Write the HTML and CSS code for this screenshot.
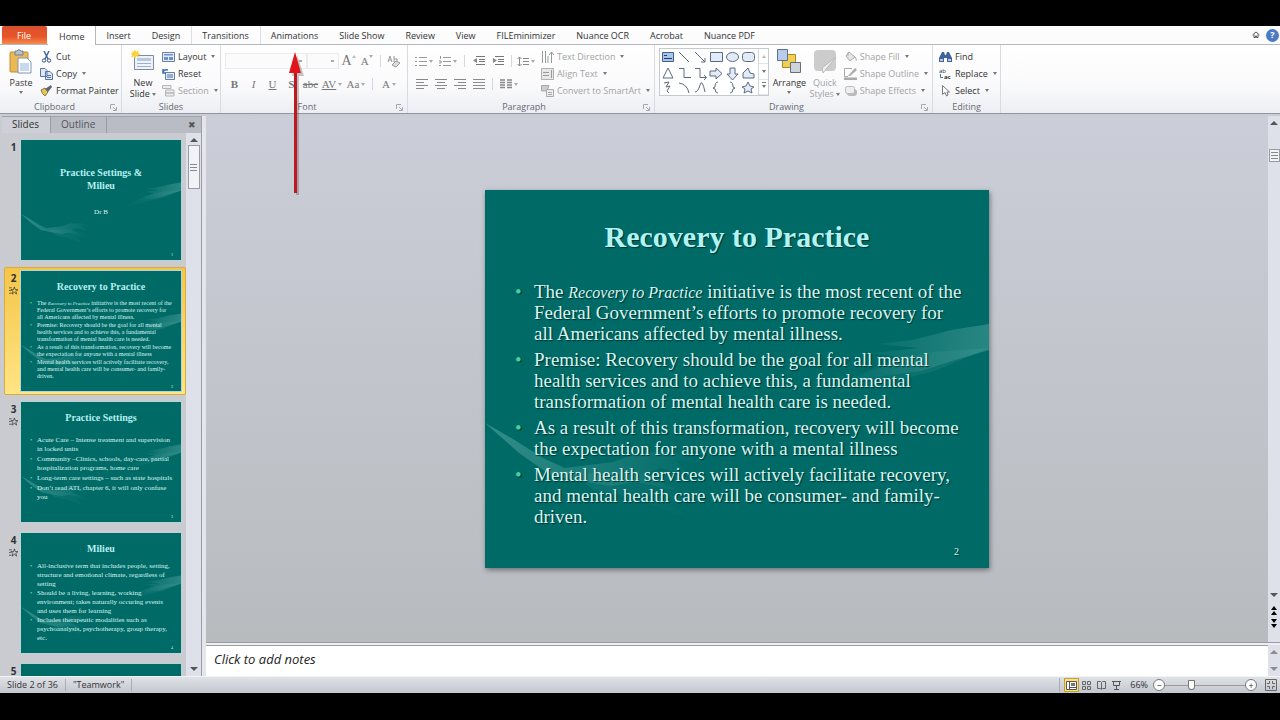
FILE: index.html
```html
<!DOCTYPE html>
<html lang="en">
<head>
    <meta charset="UTF-8">
    <meta name="viewport" content="width=device-width, initial-scale=1.0">
    <title>Recovery to Practice</title>
    <link rel="stylesheet" href="styles.css">
</head>
<body>
    <svg class="sprite" width="0" height="0" aria-hidden="true">
        <defs>
            <linearGradient id="fade"><stop offset="0" stop-color="#5aa9a3"/><stop offset="1" stop-color="#5aa9a3" stop-opacity="0"/></linearGradient>
            <linearGradient id="fadeLeft"><stop offset="0" stop-color="#5aa9a3" stop-opacity="0"/><stop offset="1" stop-color="#5aa9a3"/></linearGradient>
        </defs>
        <symbol id="hands" viewBox="0 0 504 378">
            <path fill="url(#fadeLeft)" opacity=".45" d="M392 154 428 150 466 140 504 134V160L470 170 436 181 398 186 362 190 420 168 388 163 434 158Z"/>
            <path fill="url(#fadeLeft)" opacity=".2" d="M504 158 452 180 404 193 360 202 320 214 352 196 392 176 448 162Z"/>
            <path fill="url(#fade)" opacity=".55" d="M0 233 28 249 58 268 80 278 128 272 156 262 190 262 224 274 190 270 206 286 176 278 158 284 192 300 150 292 126 296 90 290 64 284 34 263Z"/>
            <path fill="url(#fade)" opacity=".15" d="M90 284 150 282 194 290 220 312 176 306 204 328 148 308 108 300Z"/>
        </symbol>
        <symbol id="star" viewBox="0 0 10 10">
            <path fill="none" stroke="#333" stroke-width=".8" d="M6 1 7 4H10L7.500 6 8.500 9 6 7 3.500 9 4.500 6 2 4H5ZM0 2H3M0 5H2M0 8H3"/>
        </symbol>
        <symbol id="launcher" viewBox="0 0 7 7">
            <path fill="none" stroke="#a5a9b0" d="M.5 5V.5H5M3 3 6 6M6.500 3V6.500H3"/>
        </symbol>
        <symbol id="lines" viewBox="0 0 12 10">
            <path stroke="#8b8b8b" d="M0 .5H12M0 3.500H12M0 6.500H12M0 9.500H12"/>
        </symbol>
    </svg>

    <div class="window">
        <nav class="tabs">
            <button class="tab file">File</button>
            <button class="tab active">Home</button>
            <button class="tab">Insert</button>
            <button class="tab">Design</button>
            <button class="tab framed">Transitions</button>
            <button class="tab">Animations</button>
            <button class="tab">Slide Show</button>
            <button class="tab">Review</button>
            <button class="tab">View</button>
            <button class="tab">FILEminimizer</button>
            <button class="tab">Nuance OCR</button>
            <button class="tab">Acrobat</button>
            <button class="tab">Nuance PDF</button>
            <span class="tools">
                <button aria-label="Minimize the Ribbon"><svg width="8" height="8" viewBox="0 0 8 8"><path fill="none" stroke="#555" d="M.5 4 4 1 7.500 4M2 3.500V6.500H3.500V5H4.500V6.500H6V3.500"/></svg></button>
                <button class="help" aria-label="Help">?</button>
            </span>
        </nav>

        <div class="ribbon">
            <section class="group clipboard">
                <div class="content">
                    <button class="big">
                        <svg width="24" height="25" viewBox="0 0 24 25"><rect x="1" y="3" width="18" height="20" rx="1" fill="#e9b955" stroke="#c08d35"/><path fill="#b8c0cc" stroke="#76808f" d="M6 2H8Q10-1 12 2H14V6H6Z"/><path fill="#fff" stroke="#7d93b8" d="M9 9H18L22 13V24H9Z"/><path fill="#c8d8ee" d="M11 14H20V22H11Z"/></svg>
                        <span>Paste</span><i class="caret"></i>
                    </button>
                    <div class="rows">
                        <button class="item"><svg width="13" height="12" viewBox="0 0 13 12"><path fill="none" stroke="#48669c" stroke-width="1.500" d="M4 0 8 8M9 0 5 8"/><circle cx="4" cy="9.500" r="1.700" fill="none" stroke="#34528c"/><circle cx="9" cy="9.500" r="1.700" fill="none" stroke="#34528c"/></svg>Cut</button>
                        <button class="item"><svg width="13" height="12" viewBox="0 0 13 12"><path fill="#dce7f7" stroke="#58749f" d="M.5.5H5L7 2.500V8.500H.5ZM5.500 3.500H10L12.500 6V11.500H5.500Z"/><path stroke="#58749f" d="M7 7.500H11M7 9.500H11"/></svg>Copy <i class="caret"></i></button>
                        <button class="item"><svg width="13" height="12" viewBox="0 0 13 12"><path fill="#e6c65a" stroke="#8a7634" d="M1 5 5 3 8 7 5 11Q2 9 1 5Z"/><path fill="#5c6673" d="M5 4 11 0 12 2 8 7Z"/></svg>Format Painter</button>
                    </div>
                </div>
                <div class="caption dialog">Clipboard<svg class="launcher" width="7" height="7"><use href="#launcher"/></svg></div>
            </section>

            <section class="group slides">
                <div class="content">
                    <button class="big">
                        <svg width="24" height="25" viewBox="0 0 24 25"><path fill="#eef3fa" stroke="#7e8ca3" d="M3.500 6.500H22.500V20.500H3.500Z"/><path fill="#b9c9e2" d="M6 9H20V12H6Z"/><path stroke="#9eb0cc" d="M6 14.500H20M6 17.500H20"/><path fill="#f6d33c" d="M4 0 5 3 8 1 7 4 10 5 7 6 8 9 5 7 4 10 3 7 0 9 1 6 0 4 2 4 0 1 3 3Z"/></svg>
                        <span>New<br>Slide <i class="caret"></i></span>
                    </button>
                    <div class="rows">
                        <button class="item"><svg width="13" height="12" viewBox="0 0 13 12"><path fill="#e5edf8" stroke="#6b7f9f" d="M.5 1.500H12.500V10.500H.5Z"/><path fill="#6d90c8" d="M2 3H11V4.500H2ZM2 6H6V9H2ZM7 6H11V9H7Z"/></svg>Layout <i class="caret"></i></button>
                        <button class="item"><svg width="13" height="12" viewBox="0 0 13 12"><path fill="#e5edf8" stroke="#6b7f9f" d="M3.500 4.500H12.500V11.500H3.500Z"/><path fill="#93aed6" d="M5 6H11V10H5Z"/><path fill="none" stroke="#3f6db4" stroke-width="1.500" d="M1 5Q1 1 6 2M1 1V5H4"/></svg>Reset</button>
                        <button class="item" disabled><svg width="13" height="12" viewBox="0 0 13 12"><path fill="#ededed" stroke="#b5b5b5" d="M.5.5H9V3.500H.5ZM3.500 5H12V8H3.500ZM3.500 8H12V11H3.500Z"/></svg>Section <i class="caret"></i></button>
                    </div>
                </div>
                <div class="caption">Slides</div>
            </section>

            <section class="group font">
                <div class="content bars">
                    <div class="bar">
                        <select class="face" aria-label="Font" disabled><option></option></select>
                        <select class="size" aria-label="Font Size" disabled><option></option></select>
                        <button class="serif grow">A<i class="caret up"></i></button>
                        <button class="serif">A<i class="caret high"></i></button>
                        <span class="sep"></span>
                        <button aria-label="Clear Formatting"><svg width="14" height="13" viewBox="0 0 14 13"><path fill="none" stroke="#999" d="M1 7 3 1 5 7M2 5H4M7 1V7H10V4H7"/><path fill="#ddd" stroke="#999" d="M5 10 9 6 13 8 9 12Z"/></svg></button>
                    </div>
                    <div class="bar">
                        <button class="serif"><b>B</b></button>
                        <button class="serif"><em>I</em></button>
                        <button class="serif"><u>U</u></button>
                        <button class="serif"><b>S</b></button>
                        <button class="serif"><s>abc</s></button>
                        <button class="serif wide"><u>AV</u><i class="caret"></i></button>
                        <button class="serif wide">Aa<i class="caret"></i></button>
                        <span class="sep"></span>
                        <button class="serif wide">A <i class="caret"></i></button>
                    </div>
                </div>
                <div class="caption dialog">Font<svg class="launcher" width="7" height="7"><use href="#launcher"/></svg></div>
            </section>

            <section class="group paragraph">
                <div class="content">
                    <div class="bars">
                        <div class="bar">
                            <button class="wide" aria-label="Bullets"><svg width="12" height="10" viewBox="0 0 12 10"><path stroke="#999" d="M0 1.500H2M4 1.500H12M0 5.500H2M4 5.500H12M0 9.500H2M4 9.500H12"/></svg><i class="caret"></i></button>
                            <button class="wide" aria-label="Numbering"><svg width="12" height="11" viewBox="0 0 12 11"><path fill="none" stroke="#999" d="M1.500 0V3M0 5H2V7H0M0 9.500H2M4 1.500H12M4 5.500H12M4 9.500H12"/></svg><i class="caret"></i></button>
                            <span class="sep"></span>
                            <button aria-label="Decrease Indent"><svg width="12" height="10" viewBox="0 0 12 10"><path stroke="#777" d="M3 .5H12M6 3.500H12M6 5.500H12M3 8.500H12"/><path fill="#888" d="M0 4.500 4 2V7Z"/></svg></button>
                            <button aria-label="Increase Indent"><svg width="12" height="10" viewBox="0 0 12 10"><path stroke="#777" d="M3 .5H12M6 3.500H12M6 5.500H12M3 8.500H12"/><path fill="#888" d="M5 4.500 1 2V7Z"/></svg></button>
                            <span class="sep"></span>
                            <button aria-label="Line Spacing"><svg width="12" height="11" viewBox="0 0 12 11"><path fill="none" stroke="#888" d="M2.500 1V10M.5 3 2.500 1 4.500 3M.5 8 2.500 10 4.500 8M6 2.500H12M6 5.500H12M6 8.500H12"/></svg><i class="caret"></i></button>
                        </div>
                        <div class="bar">
                            <button aria-label="Align Left"><svg width="12" height="10" viewBox="0 0 12 10"><path stroke="#888" d="M0 .5H12M0 3.500H8M0 6.500H12M0 9.500H8"/></svg></button>
                            <button aria-label="Center"><svg width="12" height="10" viewBox="0 0 12 10"><path stroke="#888" d="M0 .5H12M2 3.500H10M0 6.500H12M2 9.500H10"/></svg></button>
                            <button aria-label="Align Right"><svg width="12" height="10" viewBox="0 0 12 10"><path stroke="#888" d="M0 .5H12M4 3.500H12M0 6.500H12M4 9.500H12"/></svg></button>
                            <button aria-label="Justify"><svg width="12" height="10"><use href="#lines"/></svg></button>
                            <span class="sep"></span>
                            <button class="wide" aria-label="Columns"><svg width="12" height="10" viewBox="0 0 12 10"><path stroke="#888" stroke-width="1.500" d="M0 1H5M7 1H12M0 3.500H5M7 3.500H12M0 6H5M7 6H12M0 8.500H5M7 8.500H12"/></svg><i class="caret"></i></button>
                        </div>
                    </div>
                    <div class="rows">
                        <button class="item" disabled><svg width="13" height="12" viewBox="0 0 13 12"><path fill="none" stroke="#999" d="M1.500 0V12M4.500 0V12M7 12V5M10.500 12V1M8 4 10.500 1 13 4"/></svg>Text Direction <i class="caret"></i></button>
                        <button class="item" disabled><svg width="13" height="12" viewBox="0 0 13 12"><path fill="#e8e8e8" stroke="#b0b0b0" d="M.5.5H12.500V11.500H.5Z"/><path stroke="#999" d="M2 4.500H8M2 7.500H8M10.500 2V10"/></svg>Align Text <i class="caret"></i></button>
                        <button class="item" disabled><svg width="13" height="12" viewBox="0 0 13 12"><path fill="#ccc" stroke="#aaa" d="M.5.5H8L6 6H.5Z"/><path fill="#eee" stroke="#aaa" d="M5.500 4.500H12.500V11.500H5.500Z"/><path stroke="#aaa" d="M7 7.500H11M7 9.500H11"/></svg>Convert to SmartArt <i class="caret"></i></button>
                    </div>
                </div>
                <div class="caption dialog">Paragraph<svg class="launcher" width="7" height="7"><use href="#launcher"/></svg></div>
            </section>

            <section class="group drawing">
                <div class="content">
                    <div class="gallery">
                        <svg width="98" height="46" viewBox="0 0 98 46" fill="none" stroke="#5d6b80">
                            <path fill="#a9c3ea" stroke="#42618f" d="M2.500 3.500H13.500V12.500H2.500Z"/><path stroke="#223c66" d="M4 6.500H7M4 9.500H12"/>
                            <path d="M19 3 29 13M35 3 45 13M45 9V13H41"/>
                            <path fill="#e2ebf8" d="M50.500 3.500H62.500V12.500H50.500Z"/>
                            <ellipse fill="#e2ebf8" cx="72.500" cy="8" rx="6" ry="4.500"/>
                            <rect fill="#e2ebf8" x="82.500" y="3.500" width="12" height="9" rx="3"/>
                            <path fill="#fff" d="M8 19 13 29H3Z"/>
                            <path d="M19 19.500H24V28.500H31M35 19.500H40V28.500H46M44 26 46.500 28.500 44 31"/>
                            <path fill="#e2ebf8" d="M50 22H56V19L62 24.500 56 30V27H50ZM70 19H75V25H78L72.500 31 67 25H70ZM83 29V24L88 19 90 24 94 25V29Z"/>
                            <path d="M4 34 9 33 6 38 10 37 7 42 9 44M19 34Q27 35 29 44M35 43Q38 43 40 36T45 43M58 33Q55 33 55 38L53 39 55 40Q55 44 58 44M70 33Q73 33 73 38L75 39 73 40Q73 44 70 44"/>
                            <path fill="#e2ebf8" d="M88 33 90 37 94 38 91 40 92 44 88 42 84 44 85 40 82 38 86 37Z"/>
                        </svg>
                        <div class="gallery-scroll">
                            <button aria-label="Previous shapes"><i class="caret up"></i></button>
                            <button aria-label="Next shapes"><i class="caret"></i></button>
                            <button aria-label="More shapes"><i class="caret more"></i></button>
                        </div>
                    </div>
                    <button class="big">
                        <svg width="26" height="25" viewBox="0 0 26 25"><path fill="#f1cf55" stroke="#a88927" d="M6.500 5.500H19.500V18.500H6.500Z"/><path fill="#b9cdea" stroke="#5d708f" d="M1.500.5H11.500V11.500H1.500Z"/><path fill="#cfd3da" stroke="#676d78" d="M14.500 13.500H24.500V23.500H14.500Z"/></svg>
                        <span>Arrange</span><i class="caret"></i>
                    </button>
                    <button class="big" disabled>
                        <svg width="24" height="25" viewBox="0 0 24 25"><rect x="1" y="1" width="22" height="21" rx="4" fill="#ccc"/><path fill="#eee" stroke="#bbb" d="M23 8 14 19 10 24 9 19Z"/></svg>
                        <span>Quick<br>Styles <i class="caret"></i></span>
                    </button>
                    <div class="rows">
                        <button class="item" disabled><svg width="13" height="12" viewBox="0 0 13 12"><path fill="#e5e5e5" stroke="#aaa" d="M5 1 11 6 6 10 2 5Z"/><path fill="none" stroke="#aaa" d="M4 5V1.500H6M11 6Q13 8 12 10"/></svg>Shape Fill <i class="caret"></i></button>
                        <button class="item" disabled><svg width="13" height="12" viewBox="0 0 13 12"><path fill="none" stroke="#aaa" d="M8 .5H.5V8.500H4"/><path fill="#aaa" d="M0 9.500H13V12H0ZM4 8 11 0 13 2 6 8Z"/></svg>Shape Outline <i class="caret"></i></button>
                        <button class="item" disabled><svg width="13" height="12" viewBox="0 0 13 12"><rect x="3" y="4" width="10" height="7" rx="3" fill="#bbb"/><rect x="1.500" y="1.500" width="9" height="7" rx="2" fill="#eee" stroke="#bbb"/></svg>Shape Effects <i class="caret"></i></button>
                    </div>
                </div>
                <div class="caption dialog">Drawing<svg class="launcher" width="7" height="7"><use href="#launcher"/></svg></div>
            </section>

            <section class="group editing">
                <div class="content">
                    <div class="rows">
                        <button class="item"><svg width="13" height="12" viewBox="0 0 13 12"><path fill="#40639c" d="M3 1H5L6 4H7L8 1H10L13 7V11H8V7H5V11H0V7Z"/><path fill="#b9cbe6" d="M1 8H4V10H1ZM9 8H12V10H9Z"/></svg>Find</button>
                        <button class="item"><svg width="13" height="12" viewBox="0 0 13 12"><text x="0" y="5" font-size="6" fill="#333">ab</text><text x="5" y="11" font-size="6" font-weight="700" fill="#333">ac</text><path fill="none" stroke="#4670ad" d="M1.500 6V9.500H4"/></svg>Replace <i class="caret"></i></button>
                        <button class="item"><svg width="13" height="12" viewBox="0 0 13 12"><path fill="#fff" stroke="#777" d="M3.500.5V9.500L6 7.500 7.500 11 9 10 8 7H10.500Z"/></svg>Select <i class="caret"></i></button>
                    </div>
                </div>
                <div class="caption">Editing</div>
            </section>
        </div>

        <div class="workspace">
            <aside class="panel">
                <div class="panel-tabs">
                    <button class="active">Slides</button>
                    <button>Outline</button>
                    <button class="close" aria-label="Close">✖</button>
                </div>
                <div class="panel-body">
                    <ol class="thumbs">
                        <li>
                            <div class="number">1</div>
                            <div class="thumb cover">
                                <svg class="art"><use href="#hands"/></svg>
                                <h2>Practice Settings &amp;<br>Milieu</h2>
                                <p>Dr B</p>
                                <span class="page">1</span>
                            </div>
                        </li>
                        <li class="selected">
                            <div class="number">2<svg width="9" height="9"><use href="#star"/></svg></div>
                            <div class="thumb small">
                                <svg class="art"><use href="#hands"/></svg>
                                <h2>Recovery to Practice</h2>
                                <ul>
                                    <li>The <em>Recovery to Practice</em> initiative is the most recent of the<br>Federal Government’s efforts to promote recovery for<br>all Americans affected by mental illness.</li>
                                    <li>Premise: Recovery should be the goal for all mental<br>health services and to achieve this, a fundamental<br>transformation of mental health care is needed.</li>
                                    <li>As a result of this transformation, recovery will become<br>the expectation for anyone with a mental illness</li>
                                    <li>Mental health services will actively facilitate recovery,<br>and mental health care will be consumer- and family-<br>driven.</li>
                                </ul>
                                <span class="page">2</span>
                            </div>
                        </li>
                        <li>
                            <div class="number">3<svg width="9" height="9"><use href="#star"/></svg></div>
                            <div class="thumb">
                                <svg class="art"><use href="#hands"/></svg>
                                <h2>Practice Settings</h2>
                                <ul class="spaced">
                                    <li>Acute Care – Intense treatment and supervision<br>in locked units</li>
                                    <li>Community –Clinics, schools, day-care, partial<br>hospitalization programs, home care</li>
                                    <li>Long-term care settings – such as state hospitals</li>
                                    <li>Don’t read ATI, chapter 6, it will only confuse<br>you</li>
                                </ul>
                                <span class="page">3</span>
                            </div>
                        </li>
                        <li>
                            <div class="number">4<svg width="9" height="9"><use href="#star"/></svg></div>
                            <div class="thumb">
                                <svg class="art"><use href="#hands"/></svg>
                                <h2>Milieu</h2>
                                <ul>
                                    <li>All-inclusive term that includes people, setting,<br>structure and emotional climate, regardless of<br>setting</li>
                                    <li>Should be a living, learning, working<br>environment; takes naturally occuring events<br>and uses them for learning</li>
                                    <li>Includes therapeutic modalities such as<br>psychoanalysis, psychotherapy, group therapy,<br>etc.</li>
                                </ul>
                                <span class="page">4</span>
                            </div>
                        </li>
                        <li>
                            <div class="number">5</div>
                            <div class="thumb">
                                <h2>Milieu Therapy McFly</h2>
                            </div>
                        </li>
                    </ol>
                    <div class="scrollbar">
                        <i class="arrow up"></i>
                        <span class="grip tall"></span>
                        <i class="arrow down"></i>
                    </div>
                </div>
            </aside>

            <main class="editor">
                <div class="stage">
                    <div class="canvas">
                        <article class="slide">
                            <svg class="art"><use href="#hands"/></svg>
                            <h1>Recovery to Practice</h1>
                            <ul>
                                <li>The <em>Recovery to Practice</em> initiative is the most recent of the<br>Federal Government’s efforts to promote recovery for<br>all Americans affected by mental illness.</li>
                                <li>Premise: Recovery should be the goal for all mental<br>health services and to achieve this, a fundamental<br>transformation of mental health care is needed.</li>
                                <li>As a result of this transformation, recovery will become<br>the expectation for anyone with a mental illness</li>
                                <li>Mental health services will actively facilitate recovery,<br>and mental health care will be consumer- and family-<br>driven.</li>
                            </ul>
                            <span class="page">2</span>
                        </article>
                    </div>
                    <div class="scrollbar">
                        <i class="arrow up"></i>
                        <span class="grip"></span>
                        <i class="arrow down"></i>
                        <svg class="jump" width="8" height="28" viewBox="0 0 8 28"><path d="M4 3 7 7H1ZM4 8 7 12H1ZM1 16H7L4 20ZM1 21H7L4 25Z"/></svg>
                    </div>
                </div>
                <div class="notes">
                    <textarea aria-label="Notes" placeholder="Click to add notes"></textarea>
                    <div class="scrollbar">
                        <i class="arrow up"></i>
                        <i class="arrow down"></i>
                    </div>
                </div>
            </main>
        </div>

        <footer class="status">
            <span class="cell">Slide 2 of 36</span>
            <span class="cell">"Teamwork"</span>
            <span class="views">
                <button class="active" aria-label="Normal"><svg width="11" height="9" viewBox="0 0 11 9"><path fill="#fff" stroke="#555" d="M.5.5H10.500V8.500H.5ZM3.500.5V8.500M3.500 6.500H10.500"/><path fill="#777" d="M5 2H9V5H5Z"/></svg></button>
                <button aria-label="Slide Sorter"><svg width="11" height="9" viewBox="0 0 11 9"><path fill="none" stroke="#666" d="M1.500.5H4.500V3.500H1.500ZM6.500.5H9.500V3.500H6.500ZM1.500 5.500H4.500V8.500H1.500ZM6.500 5.500H9.500V8.500H6.500Z"/></svg></button>
                <button aria-label="Reading View"><svg width="11" height="9" viewBox="0 0 11 9"><path fill="none" stroke="#666" d="M1.500.5H4.500L5.500 1.500 6.500.5H9.500V7.500H6.500L5.500 8.500 4.500 7.500H1.500ZM5.500 1.500V8"/></svg></button>
                <button aria-label="Slide Show"><svg width="11" height="9" viewBox="0 0 11 9"><path fill="none" stroke="#555" d="M1 .5H10M2.500.5V4.500H8.500V.5M5.500 4.500V8M3 8.500H8"/></svg></button>
            </span>
            <label class="percent" for="zoom">66%</label>
            <button class="round" aria-label="Zoom Out">−</button>
            <input id="zoom" type="range" min="10" max="400" value="132">
            <button class="round" aria-label="Zoom In">+</button>
            <button class="fit" aria-label="Fit slide to window"><svg width="12" height="12" viewBox="0 0 12 12"><path fill="none" stroke="#666" d="M.5.5H11.500V11.500H.5ZM4.500 2V4.500H2M7.500 2V4.500H10M4.500 10V7.500H2M7.500 10V7.500H10"/></svg></button>
        </footer>

        <svg class="pointer" width="16" height="144" viewBox="0 0 16 144" aria-hidden="true">
            <path fill="#555" opacity=".35" d="M9 3 16 24H11V143H8V24H4Z"/>
            <path fill="#c01820" d="M6 16H9V141H6Z"/>
            <path fill="#e0141a" d="M7 0 13 21H1Z"/>
        </svg>
    </div>
</body>
</html>
```

FILE: styles.css
```css
* {
    box-sizing: border-box;
}

body {
    margin: 0;
    height: 100vh;
    padding: 26px 0 27px;
    background: #000;
    color: #333;
    font: 9px/12px "Open Sans", "Noto Sans", sans-serif;
    overflow: hidden;
}

button, select, input, textarea {
    margin: 0;
    padding: 0;
    border: 0;
    background: none;
    color: inherit;
    font: inherit;
}

svg {
    flex: none;
}

.sprite {
    position: absolute;
}

.window {
    position: relative;
    display: flex;
    flex-direction: column;
    height: 100%;
    background: #c9ccd6;
}

/* ribbon tabs */
.tabs {
    display: flex;
    flex: none;
    height: 19px;
    padding-left: 2px;
    background: #fcfcfd;
    border-bottom: 1px solid #b4b7bd;
}

.tab {
    padding: 2px 11px 0 10px;
    white-space: nowrap;
}

.tab.file {
    width: 45px;
    margin-right: 1px;
    border-radius: 2px 2px 0 0;
    background: linear-gradient(#d9502c, #e8562a 60%, #f58a4b);
    color: #fff;
}

.tab.active {
    margin-bottom: -1px;
    padding-left: 11px;
    background: #fff;
    border-right: 1px solid #b4b7bd;
}

.tab.framed {
    border: solid #dcdfe4;
    border-width: 0 1px;
}

.tools {
    display: flex;
    align-items: center;
    gap: 6px;
    margin-left: auto;
    padding-right: 1px;
}

.tools button {
    display: flex;
}

.tools .help {
    justify-content: center;
    width: 13px;
    height: 13px;
    border-radius: 50%;
    background: #4a7bc4;
    color: #fff;
    font-weight: 700;
}

/* ribbon */
.ribbon {
    display: flex;
    flex: none;
    height: 69px;
    padding-left: 2px;
    background: linear-gradient(#fff, #fafafc 60%, #eceef2);
    border-bottom: 1px solid #93969d;
}

.group {
    flex: none;
    padding: 3px 4px 0;
    border-right: 1px solid #d8dbe0;
}

.clipboard {
    width: 120px;
}

.slides {
    width: 99px;
}

.font {
    width: 187px;
}

.paragraph {
    width: 247px;
}

.drawing {
    width: 278px;
}

.editing {
    width: 68px;
}

.content {
    display: flex;
    gap: 4px;
    height: 51px;
}

.caption {
    position: relative;
    display: flex;
    justify-content: center;
    align-items: center;
    height: 15px;
    color: #666a72;
}

.caption.dialog {
    padding-right: 14px;
}

.launcher {
    position: absolute;
    right: 0;
    bottom: 3px;
}

.rows {
    display: grid;
    grid-template-rows: repeat(3, 17px);
    justify-items: start;
}

.item {
    display: flex;
    align-items: center;
    gap: 3px;
    white-space: nowrap;
}

.item:disabled, .big:disabled {
    color: #a3a3a3;
}

.big {
    display: flex;
    flex-direction: column;
    align-items: center;
    min-width: 30px;
    padding-top: 1px;
    line-height: 11px;
    white-space: nowrap;
}

.big span {
    margin-top: 3px;
}

.slides .content {
    padding-left: 2px;
}

.caret {
    display: inline-block;
    flex: none;
    width: 0;
    height: 0;
    margin-left: 2px;
    border: solid transparent;
    border-width: 3px 2px 0;
    border-top-color: #777;
    vertical-align: middle;
}

.big .caret {
    margin-left: 0;
}

.big > .caret {
    margin-top: 3px;
}

.caret.up {
    border-width: 0 2px 3px;
    border-bottom-color: #bbb;
}

.bars {
    display: flex;
    flex-direction: column;
    gap: 5px;
    padding-top: 4px;
}

.bar {
    display: flex;
    align-items: center;
    height: 18px;
}

.bar button {
    display: flex;
    align-items: center;
    justify-content: center;
    width: 19px;
    height: 18px;
    color: #777;
}

.bar .wide {
    width: 24px;
}

.bar .serif {
    font: 11px/12px "Liberation Serif", serif;
}

.bar .grow {
    font-size: 14px;
}

.bar .caret {
    border-top-color: #aaa;
}

.bar .caret.up, .bar .caret.high {
    align-self: flex-start;
    margin: 3px 0 0;
}

.bar select {
    appearance: none;
    height: 16px;
    border: 1px solid #e2e4e8;
    background: linear-gradient(#888, #888) no-repeat right 4px center / 3px 2px #fbfbfc;
}

.face {
    width: 85px;
}

.size {
    width: 34px;
}

.sep {
    width: 1px;
    height: 12px;
    margin: 0 4px;
    background: #d5d7db;
}

.paragraph .content {
    justify-content: space-between;
}

.gallery {
    display: flex;
    height: 48px;
    border: 1px solid #c5c9d0;
    background: #fff;
}

.gallery-scroll {
    display: grid;
    width: 10px;
    border-left: 1px solid #d5d8de;
}

.gallery-scroll button {
    display: flex;
    align-items: center;
    justify-content: center;
    border-bottom: 1px solid #e2e4e8;
}

.gallery-scroll .caret {
    margin: 0;
}

.caret.more {
    box-shadow: 0 -2px 0 #fff, 0 -3px 0 #777;
}

.editing .content {
    padding-left: 2px;
}

/* slides panel */
.workspace {
    display: flex;
    flex: 1;
    min-height: 0;
    padding-top: 2px;
}

.panel {
    display: flex;
    flex: none;
    flex-direction: column;
    width: 206px;
    padding-left: 2px;
    background: #c9cbd1;
    border-right: 4px solid #e4e6ec;
}

.panel-tabs {
    display: flex;
    flex: none;
    height: 17px;
    border: solid #9fa2aa;
    border-width: 1px 1px 0 0;
    background: #b9bcc4;
}

.panel-tabs button {
    padding: 0 11px 2px 10px;
    border-right: 1px solid #999ca4;
    color: #555;
    font-size: 10px;
}

.panel-tabs .active {
    background: #cdd0d7;
    color: #333;
}

.panel-tabs .close {
    margin-left: auto;
    padding: 0 5px;
    border: 0;
    font-size: 9px;
}

.panel-body {
    display: flex;
    flex: 1;
    min-height: 0;
    border-right: 1px solid #9a9da6;
}

.thumbs {
    display: flex;
    flex: 1;
    flex-direction: column;
    gap: 3px;
    margin: 0;
    padding: 3px 0 0 2px;
    list-style: none;
    overflow: hidden;
}

.thumbs > li {
    display: flex;
    flex: none;
    height: 128px;
    padding: 3px;
}

.thumbs > .selected {
    background: linear-gradient(#f5c54a, #ffe584);
    border: 1px solid #d9ad3d;
    border-radius: 2px;
    padding: 2px;
}

.number {
    display: flex;
    flex-direction: column;
    align-items: center;
    gap: 2px;
    width: 13px;
    margin-top: 2px;
    font-size: 10px;
    font-weight: 700;
}

.thumb, .slide {
    position: relative;
    background: #006a67;
    color: #d6f5f1;
    font-family: "Liberation Serif", serif;
}

.thumb {
    flex: none;
    width: 162px;
    height: 122px;
    border: 1px solid #b5d5d8;
    font-size: 7px;
    line-height: 9px;
}

.art {
    position: absolute;
    inset: 0;
    width: 100%;
    height: 100%;
}

.thumb h2 {
    position: relative;
    margin: 9px 0 7px;
    color: #b5efef;
    font-size: 10px;
    line-height: 13px;
    text-align: center;
}

.thumb.cover h2 {
    margin: 26px 0 16px;
}

.thumb p {
    position: relative;
    margin: 0;
    text-align: center;
}

.thumb ul {
    position: relative;
    margin: 0;
    padding: 0 0 0 16px;
    list-style: none;
    white-space: nowrap;
}

.thumb ul.spaced {
    padding-top: 5px;
}

.thumb ul li::before, .slide li::before {
    position: absolute;
    content: "•";
    color: #48cf9f;
}

.thumb ul li::before {
    left: 9px;
}

.thumb.small {
    font-size: 6px;
    line-height: 7px;
}

.thumb.small em {
    font-size: 5px;
}

.thumb.small li, .thumb .spaced li {
    margin-bottom: 1px;
}

.scrollbar {
    display: flex;
    flex: none;
    flex-direction: column;
    align-items: center;
    width: 12px;
    padding: 5px 0;
    background: #dfe1ea;
}

.panel .scrollbar {
    width: 15px;
}

.arrow {
    border: 4px solid transparent;
}

.arrow.up {
    border-top: 0;
    border-bottom-color: #555;
}

.arrow.down {
    margin-top: auto;
    border-bottom: 0;
    border-top-color: #555;
}

.jump {
    margin: 6px 0;
}

.grip {
    width: 11px;
    height: 13px;
    margin-top: 24px;
    border: 1px solid #989ca6;
    background: repeating-linear-gradient(#888 0 1px, transparent 1px 3px) center / 7px 7px no-repeat, #f2f3f7;
}

.grip.tall {
    width: 12px;
    height: 44px;
    margin-top: 3px;
}

/* editor */
.editor {
    display: flex;
    flex: 1;
    flex-direction: column;
    min-width: 0;
}

.stage {
    display: flex;
    flex: 1;
    min-height: 0;
    border-bottom: 1px solid #9a9da6;
    background: linear-gradient(#cbced8, #b8bbbe);
}

.canvas {
    display: flex;
    flex: 1;
    align-items: center;
    justify-content: center;
}

.slide {
    width: 504px;
    aspect-ratio: 4 / 3;
    padding: 28px 0 0;
    box-shadow: 1px 2px 5px #6d7078;
    text-shadow: 1px 1px 1px #00302f;
}

.slide h1 {
    position: relative;
    margin: 0 0 25px;
    color: #b2f3f3;
    font-size: 30px;
    line-height: 38px;
    text-align: center;
}

.slide ul {
    position: relative;
    display: grid;
    gap: 5px;
    margin: 0;
    padding: 0 0 0 49px;
    list-style: none;
    font-size: 19px;
    line-height: 21px;
    white-space: nowrap;
}

.slide em {
    font-size: 16px;
    line-height: 16px;
}

.slide li::before {
    left: 30px;
}

.page {
    position: absolute;
    right: 30px;
    bottom: 10px;
    font-size: 10px;
}

.thumb .page {
    right: 8px;
    bottom: 1px;
    font-size: 4px;
}

.notes {
    display: flex;
    flex: none;
    height: 33px;
    padding-top: 2px;
    background: #eceef3;
}

.notes textarea {
    flex: 1;
    padding: 5px 8px;
    border-top: 1px solid #9a9da6;
    background: #fff;
    font: italic 13px/16px "Open Sans", sans-serif;
    resize: none;
}

.notes textarea::placeholder {
    color: #222;
}

.notes .arrow {
    opacity: 0.6;
}

/* status bar */
.status {
    display: flex;
    flex: none;
    align-items: center;
    height: 17px;
    border-top: 1px solid #f2f3f5;
    background: linear-gradient(#dfe2e6, #c3c7ce);
}

.cell {
    padding: 0 7px;
    border-right: 1px solid #a9adb5;
}

.views {
    display: flex;
    margin-left: auto;
    padding-left: 4px;
    border-left: 1px solid #a9adb5;
}

.views button {
    display: flex;
    align-items: center;
    justify-content: center;
    width: 15px;
    height: 14px;
}

.views .active {
    border: 1px solid #c79f2e;
    background: #fbe08a;
}

.percent {
    margin: 0 5px 0 6px;
}

.round {
    width: 12px;
    height: 12px;
    border: 1px solid #777;
    border-radius: 50%;
    background: #fff;
    line-height: 9px;
}

#zoom {
    appearance: none;
    width: 80px;
    height: 12px;
    background: linear-gradient(#999, #999) center / 100% 1px no-repeat;
}

#zoom::-webkit-slider-thumb {
    appearance: none;
    width: 7px;
    height: 10px;
    border: 1px solid #777;
    border-radius: 1px 1px 4px 4px;
    background: #fff;
}

.fit {
    display: flex;
    margin: 0 3px 0 8px;
}

/* red arrow over the Animations tab */
.pointer {
    position: absolute;
    left: 288px;
    top: 26px;
}
```
